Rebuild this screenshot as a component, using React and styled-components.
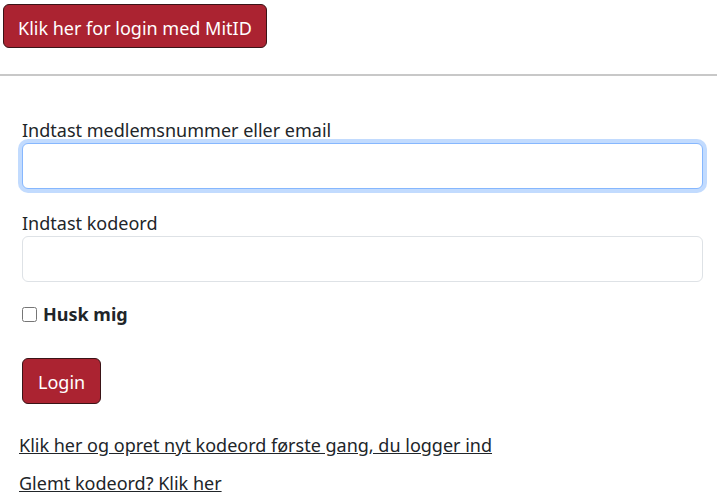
import React from "react";
import styled, { createGlobalStyle } from "styled-components";

const GlobalStyle = createGlobalStyle`
  body {
    margin: 0;
    background: #fff;
    font-family: "Noto Sans", "Open Sans", sans-serif;
    color: #212529;
  }
`;

const Page = styled.div`
  width: 717px;
`;

const RedButton = styled.button`
  display: block;
  font-family: inherit;
  font-size: 18px;
  line-height: 30px;
  padding: ${(p) => (p.$small ? "8px 15px 6px" : "8px 14px 4px")};
  margin: ${(p) => p.$margin || "0"};
  color: #fff;
  background: #ab2331;
  border: 1px solid #3a1417;
  border-radius: 6px;
  cursor: pointer;
`;

const Divider = styled.hr`
  margin: 26px 0 0;
  border: 0;
  height: 2px;
  background: #c8c8c8;
`;

const Form = styled.form`
  padding: 0 14px 0 22px;
`;

const Label = styled.label`
  display: block;
  font-size: 18px;
  line-height: 27px;
  margin-top: ${(p) => p.$top}px;
`;

const Input = styled.input`
  display: block;
  box-sizing: border-box;
  width: 100%;
  height: 46px;
  margin-top: -1px;
  padding: 6px 12px;
  font-family: inherit;
  font-size: 18px;
  border: 1px solid ${(p) => (p.$focus ? "#86b7fe" : "#dee2e6")};
  border-radius: 6px;
  outline: none;
  box-shadow: ${(p) => (p.$focus ? "0 0 0 4px rgba(13, 110, 253, 0.25)" : "none")};
`;

const CheckRow = styled.div`
  display: flex;
  align-items: center;
  gap: 6px;
  margin-top: 19px;
  font-size: 18px;
  line-height: 27px;
  font-weight: 700;
`;

const Check = styled.input`
  width: 15px;
  height: 15px;
  margin: 0;
`;

const Links = styled.div`
  padding-left: 19px;
`;

const Link = styled.a`
  display: block;
  width: fit-content;
  font-size: 18px;
  line-height: 27px;
  color: #212529;
  text-decoration: underline;
  margin-top: ${(p) => p.$top}px;
`;

export default function App() {
  return (
    <Page>
      <GlobalStyle />
      <RedButton $margin="4px 0 0 3px">Klik her for login med MitID</RedButton>
      <Divider />
      <Form onSubmit={(e) => e.preventDefault()}>
        <Label $top={41} htmlFor="user">Indtast medlemsnummer eller email</Label>
        <Input id="user" type="text" $focus />
        <Label $top={21} htmlFor="pass">Indtast kodeord</Label>
        <Input id="pass" type="password" />
        <CheckRow>
          <Check type="checkbox" id="remember" />
          <label htmlFor="remember">Husk mig</label>
        </CheckRow>
        <RedButton $small $margin="30px 0 0 0" type="submit">Login</RedButton>
      </Form>
      <Links>
        <Link href="#" $top={28}>Klik her og opret nyt kodeord første gang, du logger ind</Link>
        <Link href="#" $top={11}>Glemt kodeord? Klik her</Link>
      </Links>
    </Page>
  );
}
